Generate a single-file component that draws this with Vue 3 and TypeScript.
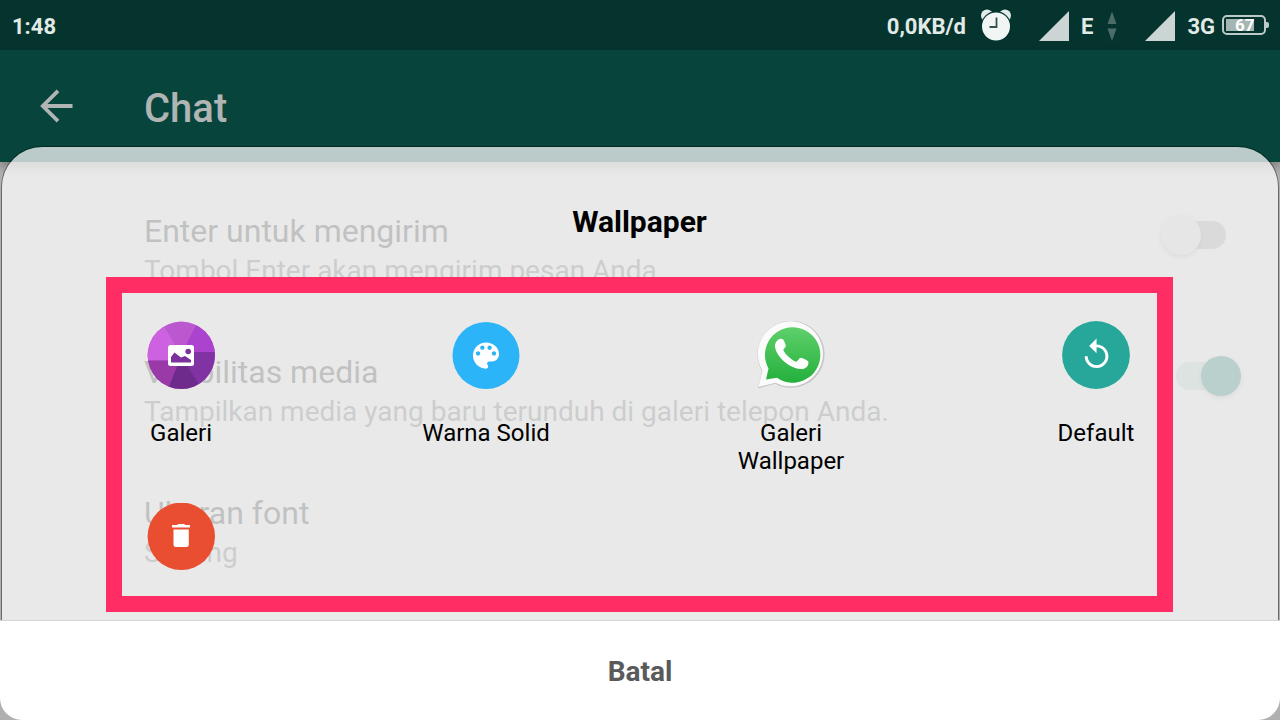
<script setup lang="ts">
import { ref } from 'vue'

interface Setting {
  id: string
  title: string
  detail: string
  toggle: boolean
}

interface WallpaperOption {
  id: string
  label: string
}

const settings: Setting[] = [
  { id: 'enter', title: 'Enter untuk mengirim', detail: 'Tombol Enter akan mengirim pesan Anda', toggle: true },
  { id: 'media', title: 'Visibilitas media', detail: 'Tampilkan media yang baru terunduh di galeri telepon Anda.', toggle: true },
  { id: 'font', title: 'Ukuran font', detail: 'Sedang', toggle: false },
]

const enabled = ref<Record<string, boolean>>({ enter: false, media: true })

const options: WallpaperOption[] = [
  { id: 'gallery', label: 'Galeri' },
  { id: 'solid', label: 'Warna Solid' },
  { id: 'library', label: 'Galeri\nWallpaper' },
  { id: 'default', label: 'Default' },
  { id: 'remove', label: '' },
]
</script>

<template>
  <div class="screen">
    <header class="status">
      <span class="clock">1:48</span>
      <span class="rate">0,0KB/d</span>
      <svg class="alarm" width="32" height="32" viewBox="0 0 32 32" aria-hidden="true">
        <circle cx="7" cy="6.500" r="6" fill="#e4ecea" />
        <circle cx="25" cy="6.500" r="6" fill="#e4ecea" />
        <circle cx="16" cy="17.500" r="15.200" fill="#04342d" />
        <circle cx="16" cy="17.500" r="14" fill="#f1f5f4" />
        <path d="M16.500 8.500V18H9.500" fill="none" stroke="#35544f" stroke-width="1.800" />
      </svg>
      <svg class="signal" width="30" height="30" viewBox="0 0 30 30" aria-hidden="true">
        <path d="M30 0V30H0Z" fill="#cbd6d4" />
      </svg>
      <span class="network">E</span>
      <svg class="traffic" width="10" height="30" viewBox="0 0 10 30" aria-hidden="true">
        <path d="M5 0.500L9.500 13H0.500ZM5 30L9.500 17.500H0.500Z" fill="#4b6d68" />
      </svg>
      <svg class="signal" width="30" height="30" viewBox="0 0 30 30" aria-hidden="true">
        <path d="M30 0V30H0Z" fill="#cbd6d4" />
      </svg>
      <span class="network">3G</span>
      <span class="battery"><span class="level">67</span></span>
    </header>

    <nav class="appbar">
      <button class="back" type="button" aria-label="Kembali">
        <svg width="34" height="34" viewBox="0 0 34 34">
          <path d="M32.500 17H3M18 1.800L2.800 17L18 32.200" fill="none" stroke="#b0b4b3" stroke-width="3.800" />
        </svg>
      </button>
      <h1>Chat</h1>
    </nav>

    <main class="settings">
      <div v-for="s in settings" :key="s.id" class="setting">
        <label class="text" :for="s.id">
          <span class="title">{{ s.title }}</span>
          <span class="detail">{{ s.detail }}</span>
        </label>
        <input v-if="s.toggle" :id="s.id" v-model="enabled[s.id]" class="switch" type="checkbox" role="switch" />
        <button v-else :id="s.id" class="open" type="button" :aria-label="s.title"></button>
      </div>
    </main>

    <section class="sheet" role="dialog" aria-labelledby="sheet-title">
      <div class="panel">
        <h2 id="sheet-title">Wallpaper</h2>
        <div class="options">
          <button v-for="o in options" :key="o.id" class="option" type="button">
            <svg v-if="o.id === 'gallery'" width="68" height="68" viewBox="0 0 68 68">
              <defs>
                <clipPath id="disc"><circle cx="34.300" cy="34.300" r="33.700" /></clipPath>
              </defs>
              <g clip-path="url(#disc)">
                <rect width="68" height="68" fill="#bb58cf" />
                <path d="M34 34L15 2L0 0V39.500H34Z" fill="#cc62df" />
                <path d="M34 34L50 2L68 0V31H38Z" fill="#ab43cf" />
                <path d="M34 31H68V68H54L34 34Z" fill="#8133a3" />
                <path d="M34 34L56 70H20Z" fill="#6f2b8b" />
                <path d="M0 39.500H32L20 70H0Z" fill="#9a3aa8" />
              </g>
              <rect x="21" y="24" width="26" height="21" rx="2.500" fill="#fff" />
              <path d="M24 41.500V36L27.500 31.500L34 36.500L38 35L44 39V41.500Z" fill="#7b329c" />
              <circle cx="41.200" cy="30.500" r="2.800" fill="#7b329c" />
            </svg>
            <svg v-else-if="o.id === 'solid'" width="68" height="68" viewBox="0 0 68 68">
              <circle cx="34" cy="34.500" r="33.500" fill="#2bb4f7" />
              <path transform="translate(16.600 17.200) scale(1.450)" d="M12 3c-4.970 0-9 4.030-9 9s4.030 9 9 9c.83 0 1.500-.67 1.500-1.500 0-.39-.15-.74-.39-1.010-.23-.26-.38-.61-.38-.99 0-.83.67-1.500 1.500-1.500H16c2.760 0 5-2.240 5-5 0-4.420-4.030-8-9-8zm-5.500 9c-.83 0-1.500-.67-1.500-1.500S5.670 9 6.500 9 8 9.670 8 10.500 7.330 12 6.500 12zm3-4C8.670 8 8 7.330 8 6.500S8.670 5 9.500 5s1.500.67 1.500 1.500S10.330 8 9.500 8zm5 0c-.83 0-1.500-.67-1.500-1.500S13.670 5 14.500 5s1.500.67 1.500 1.500S15.330 8 14.500 8zm3 4c-.83 0-1.500-.67-1.500-1.500S16.670 9 17.500 9s1.500.67 1.500 1.500-.67 1.500-1.500 1.500z" fill="#fff" />
            </svg>
            <svg v-else-if="o.id === 'library'" width="68" height="68" viewBox="0 0 68 68">
              <defs>
                <linearGradient id="bubble" x1="0" y1="0" x2="0" y2="1">
                  <stop offset="0" stop-color="#5fd06b" />
                  <stop offset="1" stop-color="#24b03c" />
                </linearGradient>
              </defs>
              <path d="M1 67.500L5 50A33.500 33.500 0 1 1 18 62.700Z" fill="#c4c7c5" />
              <path d="M1.500 66L5.500 49.500A32.500 32.500 0 1 1 18.500 61.700Z" fill="#fbfbfb" />
              <path d="M9 58.500L11.500 47.500A27.700 27.700 0 1 1 20 56.800Z" fill="url(#bubble)" />
              <path d="M24 17.700C21 17.500 17.700 21.500 18 25.500C18.500 31.500 24 38.500 31 43.500C35.500 46.600 41.500 48.600 45.800 48C49.500 47.300 52 44.300 51.300 40.500C50.800 39.500 45.500 37 43.800 36.800C42 36.800 41 40.500 39 40.700C36.500 40.500 28 33.500 26.500 29.500C25.900 28 29 26.500 28.800 24.500C28.500 22.800 26.500 18.300 25.500 17.900Z" fill="#fff" />
            </svg>
            <svg v-else-if="o.id === 'default'" width="68" height="68" viewBox="0 0 68 68">
              <circle cx="34" cy="34" r="33.900" fill="#27a79a" />
              <path transform="translate(16.800 16) scale(1.480)" d="M12 5V1L7 6l5 5V7c3.310 0 6 2.690 6 6s-2.690 6-6 6-6-2.690-6-6H4c0 4.420 3.580 8 8 8s8-3.580 8-8-3.580-8-8-8z" fill="#fff" />
            </svg>
            <svg v-else width="68" height="68" viewBox="0 0 68 68">
              <circle cx="34.300" cy="33.300" r="33.700" fill="#e94e30" />
              <path d="M25 22H30L31.500 21H37L38.500 22H43V24.500H25ZM26.500 26.500H41.800V41.500Q41.800 44 39.300 44H29Q26.500 44 26.500 41.500Z" fill="#fff" />
            </svg>
            <span v-if="o.label" class="caption">{{ o.label }}</span>
          </button>
        </div>
      </div>
      <button class="cancel" type="button">Batal</button>
    </section>
  </div>
</template>

<style>
body {
  background: #b0b0b0;
}
</style>

<style scoped>
* {
  box-sizing: border-box;
}

.screen {
  position: relative;
  min-height: 100vh;
  overflow: hidden;
  background: #b0b0b0;
  font-family: Roboto, "Liberation Sans", sans-serif;
}

button {
  margin: 0;
  padding: 0;
  border: 0;
  background: none;
  font: inherit;
  color: inherit;
}

svg {
  display: block;
  flex: none;
}

.status {
  display: flex;
  align-items: center;
  height: 50px;
  padding: 2px 10px 0 12px;
  background: #04342d;
  color: #e2eae8;
  font-size: 22px;
  line-height: 28px;
  font-weight: 700;
}

.clock,
.rate,
.network {
  padding-top: 2px;
}

.clock {
  margin-right: auto;
}

.alarm {
  margin: 0 27px 2px 14px;
}

.signal {
  margin-right: 12px;
}

.traffic {
  margin: 0 28px 0 14px;
}

.battery {
  position: relative;
  width: 44px;
  height: 20px;
  margin: 0 4px 2px 7px;
  padding: 2px;
  border: 2px solid #bccac7;
  border-radius: 5px;
}

.battery::after {
  content: "";
  position: absolute;
  top: 5px;
  right: -5px;
  width: 3px;
  height: 6px;
  border-radius: 0 2px 2px 0;
  background: #bccac7;
}

.level {
  display: block;
  width: 28px;
  height: 12px;
  padding-left: 9px;
  background: #a5b5b2;
  color: #fff;
  font-size: 17px;
  line-height: 12px;
  font-weight: 700;
}

.appbar {
  display: flex;
  align-items: center;
  gap: 70px;
  height: 112px;
  padding: 0 40px;
  background: #06443c;
  box-shadow: 0 6px 8px rgba(0, 0, 0, 0.25);
}

.appbar h1 {
  margin: 6px 0 0;
  color: #b0b4b3;
  font-size: 40px;
  line-height: 48px;
  font-weight: 500;
}

.settings {
  padding: 20px 39px 0 144px;
}

.setting {
  display: flex;
  align-items: flex-start;
  justify-content: space-between;
  height: 141px;
  padding-top: 29px;
}

.text {
  display: flex;
  flex-direction: column;
  line-height: 40px;
}

.title {
  color: #1c2020;
  font-size: 32px;
}

.detail {
  color: #484c4c;
  font-size: 28px;
}

.switch {
  position: relative;
  appearance: none;
  width: 81px;
  height: 48px;
  margin: 0;
}

.switch::before {
  content: "";
  position: absolute;
  top: 10px;
  left: 16px;
  width: 50px;
  height: 28px;
  border-radius: 14px;
  background: #7c7c7c;
}

.switch::after {
  content: "";
  position: absolute;
  top: 4px;
  left: 1px;
  width: 40px;
  height: 40px;
  border-radius: 50%;
  background: #a5a5a5;
  box-shadow: 0 2px 4px rgba(0, 0, 0, 0.25);
}

.switch:checked::before {
  background: #809a92;
}

.switch:checked::after {
  left: 41px;
  background: #025748;
}

.sheet {
  position: absolute;
  right: 0;
  bottom: 0;
  left: 0;
}

.panel {
  margin: 0 2px;
  padding: 55px 105px 8px 104px;
  border-radius: 40px 40px 0 0;
  background: rgba(254, 254, 254, 0.73);
  box-shadow: 0 0 0 1px rgba(0, 0, 0, 0.4);
}

.panel h2 {
  margin: 0 0 35px;
  color: #000;
  font-size: 30px;
  line-height: 40px;
  font-weight: 700;
  text-align: center;
}

.options {
  display: grid;
  grid-template-columns: repeat(4, 118px);
  justify-content: space-between;
  row-gap: 28px;
  padding: 28px 2px 25px 0;
  border: 16px solid #ff2d64;
}

.option {
  display: flex;
  flex-direction: column;
  align-items: center;
  justify-content: flex-start;
  gap: 30px;
}

.caption {
  color: #000;
  font-size: 24px;
  line-height: 28px;
  white-space: pre;
}

.cancel {
  position: relative;
  display: block;
  width: 100%;
  height: 100px;
  padding-top: 2px;
  border-top: 1px solid #d6d6d6;
  border-radius: 0 0 22px 22px;
  background: #fff;
  color: #5a5a5a;
  font-size: 28px;
  line-height: 40px;
  font-weight: 700;
}
</style>
